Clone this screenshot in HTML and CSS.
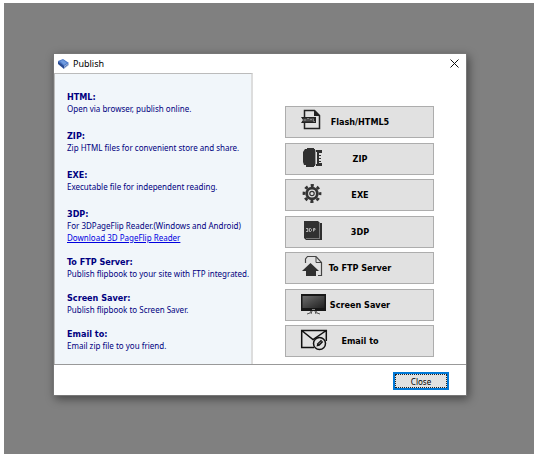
FILE: index.html
```html
<!DOCTYPE html>
<html lang="en">
<head>
<meta charset="utf-8">
<title>Publish</title>
<link rel="stylesheet" href="styles.css">
</head>
<body>
<main class="desktop">
  <section class="dialog" role="dialog" aria-labelledby="dialog-title">
    <header class="titlebar">
      <svg class="app-icon" viewBox="0 0 11 10" aria-hidden="true">
        <path d="M0 2 5 0l6 4-5 4z" fill="#4b78c8"/>
        <path d="M0 2v3l6 5V7z" fill="#284b94"/>
        <path d="M6 7v3l5-4V4z" fill="#a9bddf"/>
        <path d="m2 2 3-1 4 3-3 2z" fill="#6f9ade"/>
        <path d="m6 8.500 4-3" stroke="#3c60a8" stroke-width=".7"/>
      </svg>
      <h1 class="title" id="dialog-title">Publish</h1>
      <button class="dismiss" type="button" aria-label="Close window">
        <svg viewBox="0 0 9 9" aria-hidden="true"><path d="m.5.5 8 8m0-8-8 8" stroke="#111" stroke-width="1"/></svg>
      </button>
    </header>
    <div class="content">
      <div class="help">
        <section class="topic"><h2>HTML:</h2><p>Open via browser, publish online.</p></section>
        <section class="topic"><h2>ZIP:</h2><p>Zip HTML files for convenient store and share.</p></section>
        <section class="topic"><h2>EXE:</h2><p>Executable file for independent reading.</p></section>
        <section class="topic compact"><h2>3DP:</h2><p>For 3DPageFlip Reader.(Windows and Android)</p><p><a href="#reader">Download 3D PageFlip Reader</a></p></section>
        <section class="topic compact"><h2>To FTP Server:</h2><p>Publish flipbook to your site with FTP integrated.</p></section>
        <section class="topic compact"><h2>Screen Saver:</h2><p>Publish flipbook to Screen Saver.</p></section>
        <section class="topic compact"><h2>Email to:</h2><p>Email zip file to you friend.</p></section>
      </div>
      <div class="actions">
        <button class="action" type="button">
          <svg viewBox="0 0 28 24" aria-hidden="true">
            <path d="M4.500 9V2.500h10l5 5v13h-15V14" fill="none" stroke="#222" stroke-width="1.500"/>
            <path d="M14 2v6h6z" fill="#222"/>
            <path d="M1 9h15v6H1l2-3z" fill="#222"/>
            <path d="M4 10.500v3m2-3v3m-2-1.500h2m1-1.500h2m-1 0v3m2 0v-3l1 1.500 1-1.500v3m1.500-3v3H15" fill="none" stroke="#bbb" stroke-width=".6"/>
          </svg>
          <span>Flash/HTML5</span>
        </button>
        <button class="action" type="button">
          <svg viewBox="0 0 28 24" aria-hidden="true">
            <path d="M5 4h2V3h7v1h1v17h-1v1H6v-2H4l-1-3V7z" fill="#303030"/>
            <path d="M15 5h1v15h-1z" fill="#999"/>
            <path d="M16 5h6v3h-3v2h2v1h-2v2h2v1h-2v2h2v1h-2v1h3v3h-6v-2h1V7h-1z" fill="#303030"/>
          </svg>
          <span>ZIP</span>
        </button>
        <button class="action" type="button">
          <svg viewBox="0 0 28 24" aria-hidden="true">
            <circle cx="12" cy="12.500" r="8" fill="none" stroke="#333" stroke-width="2.800" stroke-dasharray="3.140 3.143" stroke-dashoffset="1.570"/>
            <circle cx="12" cy="12.500" r="5.300" fill="none" stroke="#333" stroke-width="2.800"/>
            <circle cx="12" cy="12.500" r="2.200" fill="none" stroke="#333" stroke-width="1.200"/>
          </svg>
          <span>EXE</span>
        </button>
        <button class="action" type="button">
          <svg viewBox="0 0 28 24" aria-hidden="true">
            <path d="M4 3h14l2 2h2v17H6l-2-2z" fill="#303030"/>
            <path d="M19.500 5v15M6 20.500h14" stroke="#999" stroke-width=".7" fill="none"/>
            <path d="M6 10.500h2v3H6m1-1.500h1m1.500-1.500v3h1.200l.8-1v-1l-.8-1zm4 3v-3H15V12h-1.500" stroke="#ddd" stroke-width=".7" fill="none"/>
          </svg>
          <span>3DP</span>
        </button>
        <button class="action" type="button">
          <svg viewBox="0 0 28 24" aria-hidden="true">
            <path d="M5.500 9V5l2-2.500H16l5.500 6v13H18" fill="none" stroke="#444" stroke-width="1.200"/>
            <path d="M16 3v5.500h5" fill="none" stroke="#444"/>
            <path d="m10.500 9 8.500 8h-3v5H6v-5H2z" fill="#303030"/>
          </svg>
          <span>To FTP Server</span>
        </button>
        <button class="action" type="button">
          <svg viewBox="0 0 28 24" aria-hidden="true">
            <defs><linearGradient id="screen" x1="0" y1="0" x2="1" y2="1"><stop stop-color="#6c6c6c"/><stop offset="1" stop-color="#202020"/></linearGradient></defs>
            <path d="M1 3h25v17H1z" fill="#171717"/>
            <path d="M2.500 5h22v12h-22z" fill="url(#screen)"/>
            <path d="M12 18.500h3" stroke="#ccc" stroke-width=".6"/>
            <path d="m11 20-1 2-3 1m9-3 1 2 3 1m-8-3-1 3m4-3 1 3" fill="none" stroke="#555" stroke-width="1"/>
          </svg>
          <span>Screen Saver</span>
        </button>
        <button class="action" type="button">
          <svg viewBox="0 0 28 24" aria-hidden="true">
            <path d="M14 20.500H1.700v-17h24.600V14M1.700 3.500 13 12.500 26.300 3.500" fill="none" stroke="#111" stroke-width="1.500"/>
            <circle cx="19.500" cy="16.500" r="6" fill="#e1e1e1" stroke="#111" stroke-width="1.500"/>
            <path d="m16.500 19.500.7-3L21 12.700l2.200 2.200-3.700 3.800z" fill="#111"/>
            <path d="m18.500 17.200 2.700-2.700" stroke="#ddd" stroke-width=".6"/>
          </svg>
          <span>Email to</span>
        </button>
      </div>
    </div>
    <footer class="footer"><button class="close" type="button">Close</button></footer>
  </section>
</main>
</body>
</html>
```
FILE: styles.css
```css
* {
  box-sizing: border-box;
}

body {
  margin: 0;
  background: #fff;
  color: #000;
  font-family: "Noto Sans", "Open Sans", sans-serif;
  font-size: 8px;
  line-height: 12px;
}

h1, h2, p {
  margin: 0;
}

button {
  font-family: inherit;
  color: inherit;
}

.desktop {
  min-height: calc(100vh - 5px);
  margin: 3px 7px 2px 4px;
  padding: 50px 67px 58px 49px;
  background: #808080;
}

.dialog {
  display: flex;
  flex-direction: column;
  border: 1px solid #777;
  background: #fff;
  box-shadow: 2px 3px 9px rgba(0, 0, 0, .45);
}

.titlebar {
  display: flex;
  align-items: center;
  height: 19px;
  padding: 0 7px 0 4px;
  gap: 4px;
}

.app-icon {
  width: 11px;
  height: 10px;
}

.title {
  flex: 1;
  font-size: 9px;
  font-weight: 400;
}

.dismiss {
  display: flex;
  padding: 0;
  border: 0;
  background: none;
}

.dismiss svg {
  width: 9px;
  height: 9px;
}

.content {
  display: grid;
  grid-template-columns: 199fr 213fr;
  border-bottom: 1px solid #999;
}

.help {
  padding: 17px 0 12px 12px;
  border: 1px solid #bbb;
  border-right: 2px solid #ddd;
  border-bottom: 0;
  background: #f1f6fa;
  color: #000080;
  white-space: nowrap;
}

.topic + .topic {
  margin-top: 15px;
}

.topic.compact + .compact {
  margin-top: 12px;
}

.topic h2,
.action {
  font-family: "DejaVu Sans Condensed", "DejaVu Sans", sans-serif;
  font-size: 9px;
  font-weight: 700;
}

.topic a {
  color: #0000e0;
}

.actions {
  display: flex;
  flex-direction: column;
  justify-content: space-between;
  padding: 33px 32px 7px;
}

.action {
  display: grid;
  grid-template-columns: 28px 64px;
  align-items: center;
  height: 32px;
  padding: 0 14px;
  border: 1px solid #adadad;
  background: #e1e1e1;
  text-align: center;
  white-space: nowrap;
}

.action svg {
  align-self: start;
  width: 28px;
  height: 24px;
  margin-top: 1px;
}

.footer {
  display: flex;
  justify-content: flex-end;
  padding: 7px 17px 5px;
}

.close {
  width: 56px;
  height: 18px;
  padding: 0;
  border: 2px solid #0078d7;
  outline: 1px dotted #222;
  outline-offset: -3px;
  background: #e1e1e1;
  font-size: 8px;
}
```
